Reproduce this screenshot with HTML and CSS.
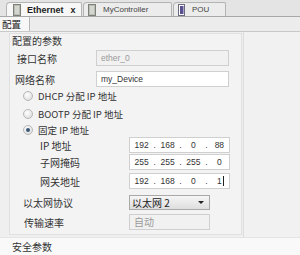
FILE: index.html
```html
<!DOCTYPE html>
<html lang="zh">
<head>
    <meta charset="UTF-8">
    <title>Ethernet 配置</title>
    <link rel="stylesheet" href="styles.css">
</head>
<body>
    <div class="tabbar">
        <div class="tab active">
            <svg class="tab-icon" width="8" height="12" viewBox="0 0 8 12">
                <rect x="0.5" y="0.5" width="7" height="11" fill="#b9bdb4" stroke="#7c8078"/>
                <path d="M2 3h4M2 5h4M2 7h4M2 9h4" stroke="#eef0ea" stroke-width="1"/>
            </svg>
            <span class="tab-title">Ethernet</span>
            <span class="tab-close">x</span>
        </div>
        <div class="tab">
            <svg class="tab-icon" width="8" height="12" viewBox="0 0 8 12">
                <rect x="0.5" y="0.5" width="7" height="11" fill="#b9bdb4" stroke="#7c8078"/>
                <path d="M2 3h4M2 5h4M2 7h4M2 9h4" stroke="#eef0ea" stroke-width="1"/>
            </svg>
            <span class="tab-title">MyController</span>
        </div>
        <div class="tab short">
            <svg class="tab-icon" width="7" height="12" viewBox="0 0 7 12">
                <rect x="0.5" y="0.5" width="6" height="11" fill="#ffffff" stroke="#6b6b80"/>
                <rect x="2" y="2" width="3.5" height="8" fill="#5a4f93"/>
            </svg>
            <span class="tab-title">POU</span>
        </div>
    </div>

    <div class="subbar">
        <div class="subtab">配置</div>
    </div>

    <div class="page">
        <div class="main">
            <div class="group">
                <div class="group-title">配置的参数</div>

                <div class="row r-name">
                    <span class="label lbl-a">接口名称</span>
                    <div class="field wide disabled">ether_0</div>
                </div>
                <div class="row r-net">
                    <span class="label lbl-b">网络名称</span>
                    <div class="field wide">my_Device</div>
                </div>

                <div class="row r-dhcp">
                    <span class="radio"></span>
                    <span class="radio-text">DHCP 分配 IP 地址</span>
                </div>
                <div class="row r-bootp">
                    <span class="radio"></span>
                    <span class="radio-text">BOOTP 分配 IP 地址</span>
                </div>
                <div class="row r-fixed">
                    <span class="radio checked"></span>
                    <span class="radio-text">固定 IP 地址</span>
                </div>

                <div class="row r-ip">
                    <span class="label lbl-ip">IP 地址</span>
                    <div class="field ip">
                        <span class="oct">192</span><span class="dot">.</span>
                        <span class="oct">168</span><span class="dot">.</span>
                        <span class="oct">0</span><span class="dot">.</span>
                        <span class="oct">88</span>
                    </div>
                </div>
                <div class="row r-mask">
                    <span class="label lbl-ip">子网掩码</span>
                    <div class="field ip">
                        <span class="oct">255</span><span class="dot">.</span>
                        <span class="oct">255</span><span class="dot">.</span>
                        <span class="oct">255</span><span class="dot">.</span>
                        <span class="oct">0</span>
                    </div>
                </div>
                <div class="row r-gw">
                    <span class="label lbl-ip">网关地址</span>
                    <div class="field ip">
                        <span class="oct">192</span><span class="dot">.</span>
                        <span class="oct">168</span><span class="dot">.</span>
                        <span class="oct">0</span><span class="dot">.</span>
                        <span class="oct">1<span class="caret"></span></span>
                    </div>
                </div>

                <div class="row r-proto">
                    <span class="label lbl-c">以太网协议</span>
                    <div class="select">
                        <span>以太网 2</span>
                        <span class="arrow"></span>
                    </div>
                </div>
                <div class="row r-speed">
                    <span class="label lbl-d">传输速率</span>
                    <div class="field short disabled">自动</div>
                </div>
            </div>
        </div>
        <div class="side"></div>
    </div>

    <div class="next">
        <div class="next-title">安全参数</div>
    </div>
</body>
</html>
```

FILE: styles.css
```css
body {
    margin: 0;
    width: 300px;
    height: 255px;
    overflow: hidden;
    background: #efefef;
    color: #333;
    font-family: "Noto Sans CJK SC", "Liberation Sans", sans-serif;
    font-size: 10px;
}

/* top editor tabs */
.tabbar {
    height: 16px;
    display: flex;
    align-items: flex-end;
    padding-left: 6px;
    background: #e4e4e4;
    border-bottom: 1px solid #a8a8a8;
}

.tab {
    height: 14px;
    width: 76px;
    display: flex;
    align-items: center;
    box-sizing: border-box;
    padding-left: 6px;
    margin-right: 1px;
    background: #ececec;
    border: 1px solid #b4b4b4;
    border-bottom: none;
    border-radius: 4px 2px 0 0;
}

.tab + .tab {
    width: 89px;
    padding-left: 4px;
}

.tab.short {
    width: 53px;
}

.tab.active {
    background: #f7f7f7;
}

.tab-icon {
    flex: none;
}

.tab-title {
    font-family: "Liberation Sans", sans-serif;
    font-size: 8px;
    margin-left: 7px;
    color: #444;
}

.active .tab-title {
    font-size: 9px;
    font-weight: bold;
    margin-left: 6px;
    color: #222;
}

.tab-close {
    font-family: "Liberation Sans", sans-serif;
    font-size: 9px;
    font-weight: bold;
    margin-left: 7px;
    color: #222;
}

/* sub tab */
.subbar {
    height: 14px;
    display: flex;
    background: #ececec;
    border-bottom: 1px solid #c8c8c8;
}

.subtab {
    width: 30px;
    box-sizing: border-box;
    padding-left: 2px;
    line-height: 14px;
    font-size: 9.5px;
    background: #f7f7f7;
    border-right: 1px solid #b8b8b8;
    color: #222;
}

/* page */
.page {
    display: flex;
    height: 205px;
}

.main {
    width: 243px;
    border-right: 1px solid #dcdcdc;
    padding-top: 1px;
}

.side {
    flex: 1;
    background: #f1f1f1;
}

.group {
    margin-left: 9px;
    width: 233px;
    height: 202px;
    box-sizing: border-box;
    background: #f3f3f3;
    border: 1px solid #e0e0e0;
}

.group-title {
    height: 14px;
    line-height: 14px;
    padding-left: 2px;
    color: #333;
}

.row {
    display: flex;
    align-items: center;
    height: 16px;
}

.label {
    box-sizing: border-box;
    flex: none;
    white-space: nowrap;
}

.lbl-a { width: 86px; padding-left: 7px; }
.lbl-b { width: 86px; padding-left: 5px; }
.lbl-ip { width: 119px; padding-left: 30px; }
.lbl-c { width: 119px; padding-left: 13px; }
.lbl-d { width: 119px; padding-left: 14px; }

.r-name { margin-top: 2px; }
.r-net { margin-top: 5px; }
.r-dhcp { height: 18px; }
.r-bootp { height: 17px; }
.r-fixed { height: 15px; }
.r-mask { margin-top: 1px; }
.r-gw { margin-top: 3px; }
.r-proto { margin-top: 6px; height: 15px; }
.r-speed { margin-top: 4px; }

.field {
    height: 16px;
    box-sizing: border-box;
    background: #fff;
    border: 1px solid #cfcfcf;
    padding-left: 4px;
    line-height: 14px;
    font-family: "Liberation Sans", sans-serif;
    font-size: 8.5px;
    color: #333;
}

.field.wide { width: 133px; }
.field.short {
    width: 81px;
    font-family: "Noto Sans CJK SC", sans-serif;
    font-size: 10px;
}

.field.disabled {
    background: #f1f1f1;
    color: #9a9a9a;
}

.field.ip {
    width: 101px;
    display: flex;
    padding-left: 2px;
}

.oct {
    width: 20px;
    text-align: center;
    position: relative;
}

.dot {
    width: 7px;
    text-align: center;
}

.caret {
    position: absolute;
    top: 2px;
    margin-left: 1px;
    width: 1px;
    height: 10px;
    background: #222;
}

.radio {
    flex: none;
    width: 8px;
    height: 8px;
    margin-left: 13px;
    margin-right: 5px;
    border-radius: 50%;
    border: 1px solid #b8b8b8;
    background: radial-gradient(circle at 40% 35%, #ffffff, #d6d6d6);
    position: relative;
}

.radio.checked::after {
    content: "";
    position: absolute;
    left: 2px;
    top: 2px;
    width: 4px;
    height: 4px;
    border-radius: 50%;
    background: #3b5777;
}

.radio-text {
    font-size: 9.5px;
    white-space: nowrap;
}

.select {
    width: 81px;
    height: 15px;
    box-sizing: border-box;
    display: flex;
    align-items: center;
    justify-content: space-between;
    padding: 0 5px 0 2px;
    border: 1px solid #a9a9a9;
    background: linear-gradient(#f6f6f6, #dedede);
    color: #222;
}

.arrow {
    width: 0;
    height: 0;
    border-left: 3px solid transparent;
    border-right: 3px solid transparent;
    border-top: 3px solid #222;
}

/* next section, at the bottom edge */
.next {
    background: #f9f9f9;
    height: 17px;
    border-top: 1px solid #e4e4e4;
}

.next-title {
    padding: 3px 0 0 12px;
    line-height: 12px;
    color: #333;
}
```
